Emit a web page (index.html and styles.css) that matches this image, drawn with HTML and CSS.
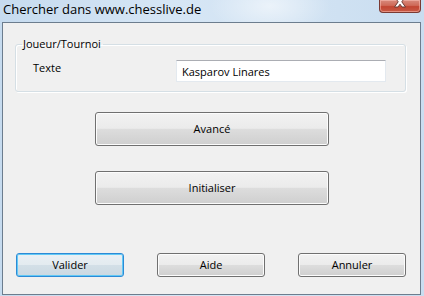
FILE: index.html
```html
<!DOCTYPE html>
<html lang="fr">
<head>
<meta charset="utf-8">
<title>Chercher dans www.chesslive.de</title>
<link rel="stylesheet" href="styles.css">
</head>
<body>
<div class="window">
  <div class="titlebar">
    <span class="title">Chercher dans www.chesslive.de</span>
    <button class="close" type="button" aria-label="Fermer">
      <svg width="18" height="9" viewBox="0 0 18 9">
        <path d="M3.5 -3 L7 -3 L9 -0.5 L11 -3 L14.5 -3 L10.8 1.8 L14.5 7 L11 7 L9 4.2 L7 7 L3.5 7 L7.2 1.8 Z" fill="#ffffff" stroke="#6a3a34" stroke-width="1" stroke-linejoin="round"/>
      </svg>
    </button>
  </div>
  <div class="client">
    <fieldset class="group">
      <legend class="group-label">Joueur/Tournoi</legend>
      <div class="field-row">
        <label class="field-label" for="texte">Texte</label>
        <input class="textbox" id="texte" type="text" value="Kasparov Linares">
      </div>
    </fieldset>
    <button class="btn btn-wide btn-advanced" type="button">Avancé</button>
    <button class="btn btn-wide btn-reset" type="button">Initialiser</button>
    <div class="actions">
      <button class="btn btn-small btn-default" type="button">Valider</button>
      <button class="btn btn-small" type="button">Aide</button>
      <button class="btn btn-small" type="button">Annuler</button>
    </div>
  </div>
</div>
</body>
</html>
```

FILE: styles.css
```css
html, body {
  margin: 0;
  padding: 0;
}

body {
  width: 424px;
  height: 296px;
  overflow: hidden;
  font-family: "Open Sans", "Noto Sans", "DejaVu Sans", sans-serif;
  font-size: 11px;
  color: #000;
}

.window {
  width: 424px;
  height: 296px;
  display: flex;
  flex-direction: column;
  background:
    radial-gradient(ellipse 60px 30px at 270px 6px, rgba(255,255,255,0.55), rgba(255,255,255,0) 100%),
    linear-gradient(to right, #c6dbef 0%, #d6e6f5 40%, #d2e3f3 70%, #c9ddf0 100%);
}

.titlebar {
  height: 22px;
  display: flex;
  justify-content: space-between;
  align-items: flex-start;
  flex-shrink: 0;
}

.title {
  padding: 0 0 0 3px;
  font-size: 13px;
  line-height: 18px;
  white-space: nowrap;
}

.close {
  width: 42px;
  height: 13px;
  margin: 0 3px 0 0;
  padding: 0;
  border: 1px solid #7a3a33;
  border-top: none;
  border-radius: 0 0 4px 4px;
  background: linear-gradient(to bottom, #d88a7c 0%, #cf6a58 45%, #c24632 55%, #c85a46 100%);
  box-shadow: inset 0 0 0 1px rgba(255,200,190,0.5);
  display: flex;
  justify-content: center;
  align-items: flex-start;
}

.close svg {
  display: block;
}

.client {
  height: 271px;
  margin: 0 3px 0 2px;
  border: 1px solid #6c7d8e;
  background: #f0f0f0;
  display: flex;
  flex-direction: column;
  align-items: flex-start;
}

.group {
  margin: 13px 0 0 12px;
  width: 391px;
  padding: 0 19px 9px 17px;
  box-sizing: border-box;
  border: 1px solid #d5dfe5;
  border-radius: 3px;
  box-shadow: inset 1px 1px 0 #ffffff, 1px 1px 0 #ffffff;
  min-width: 0;
}

.group-label {
  margin-left: -11px;
  padding: 0 2px 0 1px;
  line-height: 16px;
}

.field-row {
  margin-top: 8px;
  display: flex;
  align-items: flex-start;
}

.field-label {
  width: 143px;
  line-height: 16px;
  flex-shrink: 0;
}

.textbox {
  width: 212px;
  height: 22px;
  box-sizing: border-box;
  margin: 0;
  padding: 0 0 0 5px;
  border: 1px solid #e3e9ef;
  border-top-color: #abadb3;
  background: #fff;
  font: inherit;
  color: #000;
  outline: none;
}

.btn {
  box-sizing: border-box;
  margin: 0;
  padding: 0;
  border: 1px solid #707070;
  border-radius: 3px;
  background: linear-gradient(to bottom, #f2f2f2 0%, #ebebeb 48%, #dddddd 50%, #cfcfcf 100%);
  box-shadow: inset 0 0 0 1px #fcfcfc;
  font: inherit;
  color: #000;
  line-height: 16px;
}

.btn-wide {
  width: 234px;
  height: 34px;
  margin-left: 92px;
}

.btn-advanced {
  margin-top: 20px;
}

.btn-reset {
  margin-top: 25px;
}

.actions {
  margin: 48px 0 0 13px;
  display: flex;
  gap: 33px;
}

.btn-small {
  width: 108px;
  height: 24px;
}

.btn-default {
  border-color: #2c8ad6;
  background: linear-gradient(to bottom, #eaf0f4 0%, #e3ebf0 48%, #d3dfe7 50%, #cbd9e2 100%);
  box-shadow: inset 0 0 0 1px #62c9f5;
}
```
